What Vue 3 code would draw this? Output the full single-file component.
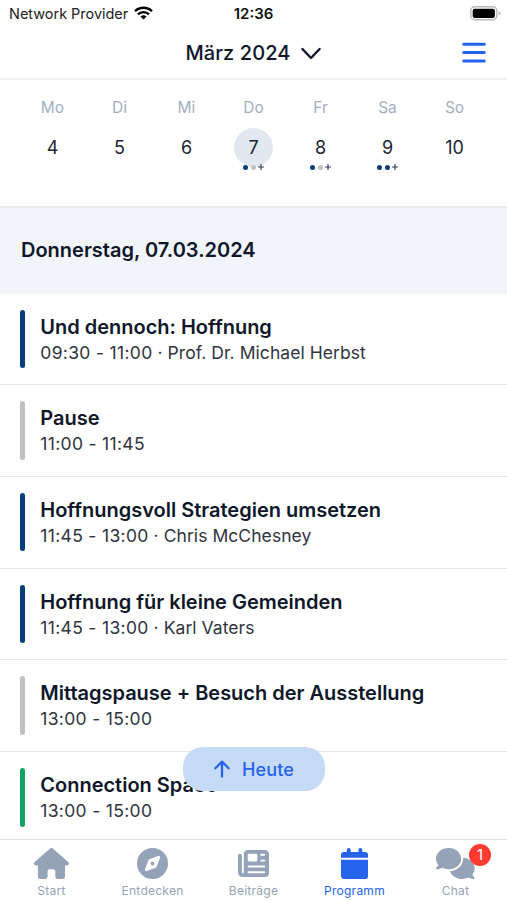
<script setup>
const days = [
  { name: 'Mo', num: 4 },
  { name: 'Di', num: 5 },
  { name: 'Mi', num: 6 },
  { name: 'Do', num: 7, selected: true, dots: ['blue', 'grey'] },
  { name: 'Fr', num: 8, dots: ['blue', 'grey'] },
  { name: 'Sa', num: 9, dots: ['blue', 'blue'] },
  { name: 'So', num: 10 },
]

const events = [
  { title: 'Und dennoch: Hoffnung', time: '09:30 - 11:00', speaker: 'Prof. Dr. Michael Herbst', color: 'blue' },
  { title: 'Pause', time: '11:00 - 11:45', color: 'grey' },
  { title: 'Hoffnungsvoll Strategien umsetzen', time: '11:45 - 13:00', speaker: 'Chris McChesney', color: 'blue' },
  { title: 'Hoffnung für kleine Gemeinden', time: '11:45 - 13:00', speaker: 'Karl Vaters', color: 'blue' },
  { title: 'Mittagspause + Besuch der Ausstellung', time: '13:00 - 15:00', color: 'grey' },
  { title: 'Connection Space', time: '13:00 - 15:00', color: 'green' },
]

const tabs = [
  {
    label: 'Start',
    w: 576,
    d: 'M575.8 255.5c0 18-15 32.1-32 32.1h-32l.7 160.2c0 2.7-.2 5.4-.5 8.1V472c0 22.1-17.9 40-40 40H456c-1.1 0-2.2 0-3.3-.1c-1.4 .1-2.8 .1-4.2 .1H416 392c-22.1 0-40-17.9-40-40V448 384c0-17.7-14.3-32-32-32H256c-17.7 0-32 14.3-32 32v64 24c0 22.1-17.9 40-40 40H160 128.1c-1.5 0-3-.1-4.5-.2c-1.2 .1-2.4 .2-3.6 .2H104c-22.1 0-40-17.9-40-40V360c0-.9 0-1.9 .1-2.8V287.6H32c-18 0-32-14-32-32.1c0-9 3-17 10-24L266.4 8c7-7 15-8 22-8s15 2 21 7L564.8 231.5c8 7 12 15 11 24z',
  },
  {
    label: 'Entdecken',
    w: 512,
    d: 'M256 512A256 256 0 1 0 256 0a256 256 0 1 0 0 512zm50.7-186.9L162.4 380.6c-19.4 7.5-38.5-11.6-31-31l55.5-144.3c3.3-8.5 9.9-15.1 18.4-18.4l144.3-55.5c19.4-7.5 38.5 11.6 31 31L325.1 306.7c-3.2 8.5-9.9 15.1-18.4 18.4zM288 256a32 32 0 1 0 -64 0 32 32 0 1 0 64 0z',
  },
  {
    label: 'Beiträge',
    w: 512,
    d: 'M96 96c0-35.3 28.7-64 64-64H448c35.3 0 64 28.7 64 64V416c0 35.3-28.7 64-64 64H80c-44.2 0-80-35.8-80-80V128c0-17.7 14.3-32 32-32s32 14.3 32 32V400c0 8.8 7.2 16 16 16s16-7.2 16-16V96zm64 24v80c0 13.3 10.7 24 24 24H296c13.3 0 24-10.7 24-24V120c0-13.3-10.7-24-24-24H184c-13.3 0-24 10.7-24 24zm208-8c0 8.8 7.2 16 16 16h48c8.8 0 16-7.2 16-16s-7.2-16-16-16H384c-8.8 0-16 7.2-16 16zm0 96c0 8.8 7.2 16 16 16h48c8.8 0 16-7.2 16-16s-7.2-16-16-16H384c-8.8 0-16 7.2-16 16zM160 304c0 8.8 7.2 16 16 16H432c8.8 0 16-7.2 16-16s-7.2-16-16-16H176c-8.8 0-16 7.2-16 16zm0 96c0 8.8 7.2 16 16 16H432c8.8 0 16-7.2 16-16s-7.2-16-16-16H176c-8.8 0-16 7.2-16 16z',
  },
  {
    label: 'Programm',
    w: 448,
    active: true,
    d: 'M96 32V64H48C21.5 64 0 85.5 0 112v48H448V112c0-26.5-21.5-48-48-48H352V32c0-17.7-14.3-32-32-32s-32 14.3-32 32V64H160V32c0-17.7-14.3-32-32-32S96 14.3 96 32zM448 192H0V464c0 26.5 21.5 48 48 48H400c26.5 0 48-21.5 48-48V192z',
  },
  {
    label: 'Chat',
    w: 640,
    badge: 1,
    d: 'M208 352c114.9 0 208-78.8 208-176S322.9 0 208 0S0 78.8 0 176c0 38.6 14.7 74.3 39.6 103.4c-3.5 9.4-8.7 17.7-14.2 24.7c-4.8 6.2-9.7 11-13.3 14.3c-1.8 1.6-3.3 2.9-4.3 3.7c-.5 .4-.9 .7-1.1 .8l-.2 .2C1 327.2-1.4 334.4 .8 340.9S9.1 352 16 352c21.8 0 43.8-5.6 62.1-12.5c9.2-3.5 17.8-7.4 25.3-11.4C134.1 343.3 169.8 352 208 352zM448 176c0 112.3-99.1 196.9-216.5 207C255.8 457.4 336.4 512 432 512c38.2 0 73.9-8.7 104.7-23.9c7.5 4 16 7.9 25.2 11.4c18.3 6.9 40.3 12.5 62.1 12.5c6.9 0 13.1-4.5 15.2-11.1c2.1-6.6-.2-13.8-5.8-17.9l-.2-.2c-.2-.2-.6-.4-1.1-.8c-1-.8-2.5-2-4.3-3.7c-3.6-3.3-8.5-8.1-13.3-14.3c-5.5-7-10.7-15.4-14.2-24.7c24.9-29 39.6-64.7 39.6-103.4c0-92.8-84.9-168.9-192.6-175.5c.4 5.1 .6 10.3 .6 15.5z',
  },
]
</script>

<template>
  <div class="screen">
    <div class="status">
      <div class="carrier">
        <span>Network Provider</span>
        <svg class="wifi" width="19" height="14" viewBox="0 0 19 14">
          <g fill="none" stroke="#000" stroke-width="2.3">
            <path d="M1 5.2a12.2 12.2 0 0 1 17 0" />
            <path d="M4 8.3a7.9 7.9 0 0 1 11 0" />
          </g>
          <path d="M9.5 13.6L6.5 10.6a4.3 4.3 0 0 1 6 0z" />
        </svg>
      </div>
      <div class="clock">12:36</div>
      <div class="power">
        <svg width="31" height="15" viewBox="0 0 31 15">
          <rect x=".8" y=".8" width="26" height="13" rx="4" fill="#fff" stroke="#b9b9b9" stroke-width="1.4" />
          <rect x="2.7" y="2.7" width="22.2" height="9.2" rx="2" />
          <path d="M28.6 5.2q2 .6 2 2.1t-2 2.1z" fill="#b9b9b9" />
        </svg>
      </div>
    </div>

    <header class="header">
      <button class="month">
        <span>März 2024</span>
        <svg width="20" height="13" viewBox="0 0 20 13" fill="none" stroke="#0f172a" stroke-width="2.4" stroke-linecap="round" stroke-linejoin="round">
          <path d="M1.4 2L10 11l8.6-9" />
        </svg>
      </button>
      <button class="menu">
        <svg width="24" height="22" viewBox="0 0 24 22" stroke="#2563eb" stroke-width="3" stroke-linecap="round">
          <path d="M1.7 2.3h20.6M1.7 10.6h20.6M1.7 19h20.6" />
        </svg>
      </button>
    </header>

    <section class="week">
      <div v-for="d in days" :key="d.num" class="day">
        <span class="dname">{{ d.name }}</span>
        <span class="num" :class="{ selected: d.selected }">{{ d.num }}</span>
        <span v-if="d.dots" class="dots">
          <i v-for="(c, i) in d.dots" :key="i" :class="c"></i>
          <svg width="6" height="6" viewBox="0 0 6 6" stroke="#334155" stroke-width="1.2"><path d="M0 3h6M3 0v6" /></svg>
        </span>
      </div>
    </section>

    <h2 class="date">Donnerstag, 07.03.2024</h2>

    <main class="list">
      <article v-for="e in events" :key="e.title" class="event">
        <div class="bar" :class="e.color"></div>
        <div class="info">
          <div class="title">{{ e.title }}</div>
          <div class="meta"><span class="time">{{ e.time }}</span><span v-if="e.speaker"> · {{ e.speaker }}</span></div>
        </div>
      </article>
    </main>

    <button class="today">
      <svg width="16" height="18" viewBox="0 0 16 18" fill="none" stroke="#2563eb" stroke-width="2.3" stroke-linecap="round" stroke-linejoin="round">
        <path d="M8 16.6V1.6M1.4 8.2L8 1.6l6.6 6.6" />
      </svg>
      <span>Heute</span>
    </button>

    <nav class="tabs">
      <div v-for="t in tabs" :key="t.label" class="tab" :class="{ active: t.active }">
        <div class="icon">
          <svg height="31" :viewBox="`0 0 ${t.w} 512`" fill="currentColor"><path :d="t.d" /></svg>
          <span v-if="t.badge" class="badge">{{ t.badge }}</span>
        </div>
        <span class="label">{{ t.label }}</span>
      </div>
    </nav>
  </div>
</template>

<style>
body {
  margin: 0;
  background: #fff;
}
</style>

<style scoped>
.screen {
  position: relative;
  display: flex;
  flex-direction: column;
  width: 507px;
  height: 900px;
  overflow: hidden;
  background: #fff;
  color: #0f172a;
  font-family: Inter, "Liberation Sans", sans-serif;
}
button {
  border: 0;
  padding: 0;
  background: none;
  color: inherit;
  font: inherit;
}
svg {
  display: block;
}
.status {
  flex: none;
  display: grid;
  grid-template-columns: 1fr auto 1fr;
  align-items: center;
  height: 27px;
  padding: 0 6px 0 6px;
  font-size: 15px;
  color: #222;
}
.carrier {
  display: flex;
  align-items: center;
  gap: 6px;
  padding-left: 3px;
  font-size: 14.5px;
  letter-spacing: -0.03px;
}
.wifi {
  margin-top: -1px;
}
.clock {
  color: #111;
  font-weight: 600;
}
.power {
  justify-self: end;
}
.header {
  flex: none;
  display: grid;
  grid-template-columns: 1fr auto 1fr;
  align-items: center;
  height: 50px;
  padding: 1px 21px 0;
  border-bottom: 2px solid #efefef;
}
.month {
  grid-column: 2;
  display: flex;
  align-items: center;
  gap: 11px;
  font-size: 20px;
  font-weight: 500;
  letter-spacing: 0.08px;
}
.menu {
  justify-self: end;
}
.week {
  flex: none;
  display: grid;
  grid-template-columns: repeat(7, 67px);
  justify-content: center;
  height: 126px;
  border-bottom: 2px solid #e8ebee;
}
.day {
  display: flex;
  flex-direction: column;
  align-items: center;
  padding-top: 18px;
}
.dname {
  font-size: 15.5px;
  line-height: 20px;
  color: #a3afc0;
}
.num {
  display: flex;
  align-items: center;
  justify-content: center;
  width: 39px;
  height: 39px;
  margin-top: 10px;
  border-radius: 50%;
  font-size: 18px;
  color: #20242f;
}
.selected {
  background: #e2e8f0;
}
.dots {
  display: flex;
  align-items: center;
  gap: 2.2px;
  margin-top: -3px;
}
.dots i {
  width: 5px;
  height: 5px;
  border-radius: 50%;
}
.blue {
  background: #083d7c;
}
.grey {
  background: #c1c1c1;
}
.green {
  background: #12a362;
}
.date {
  flex: none;
  height: 85.5px;
  margin: 0;
  padding-left: 21px;
  background: #f1f5f9;
  font-size: 20px;
  font-weight: 600;
  line-height: 85px;
}
.list {
  flex: 1;
  min-height: 0;
  overflow: hidden;
}
.event {
  display: flex;
  align-items: center;
  gap: 15px;
  box-sizing: border-box;
  height: 91.7px;
  padding-left: 20.3px;
  border-bottom: 1.5px solid #e5e8eb;
}
.bar {
  width: 5px;
  height: 58.5px;
  border-radius: 3px;
}
.info {
  padding-top: 0.8px;
}
.title {
  font-size: 20px;
  font-weight: 600;
  line-height: 26px;
  letter-spacing: -0.01px;
  white-space: nowrap;
}
.meta {
  font-size: 17.5px;
  line-height: 25px;
  letter-spacing: 0.06px;
  color: #303440;
  white-space: nowrap;
}
.time {
  letter-spacing: 0.32px;
}
.today {
  position: absolute;
  left: 183px;
  top: 747px;
  display: flex;
  align-items: center;
  justify-content: center;
  gap: 12px;
  width: 142px;
  height: 44px;
  border-radius: 20px;
  background: #c5daf5;
  color: #2563eb;
  font-size: 18px;
  font-weight: 500;
  letter-spacing: 0.15px;
}
.tabs {
  flex: none;
  display: grid;
  grid-template-columns: repeat(5, 101px);
  justify-content: center;
  box-sizing: border-box;
  height: 61px;
  border-top: 1.5px solid #e2e5e8;
}
.tab {
  display: flex;
  flex-direction: column;
  align-items: center;
  padding-top: 8px;
  color: #94a3b8;
}
.icon {
  position: relative;
}
.label {
  margin-top: 4px;
  font-size: 12px;
  line-height: 16px;
  letter-spacing: 0.25px;
}
.active {
  color: #2563eb;
}
.badge {
  position: absolute;
  left: 33px;
  top: -4px;
  width: 22px;
  height: 22px;
  border-radius: 50%;
  background: #ff3b30;
  color: #fff;
  font-size: 15px;
  line-height: 22px;
  text-align: center;
}
</style>
